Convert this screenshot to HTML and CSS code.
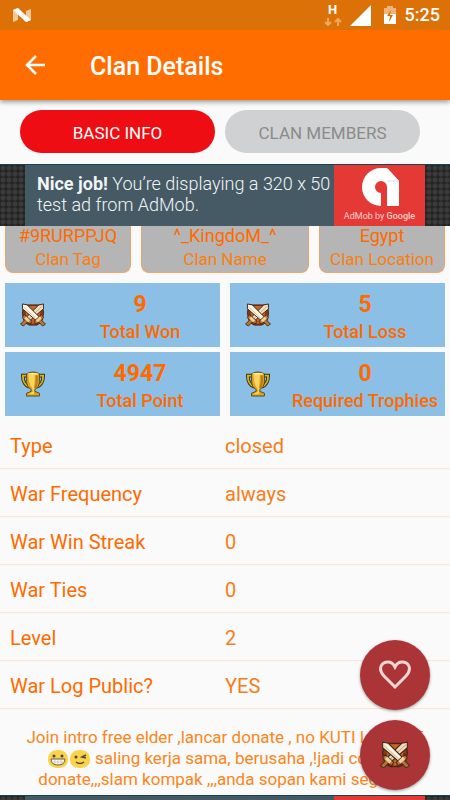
FILE: index.html
```html
<!DOCTYPE html>
<html lang="en">
<head>
<meta charset="utf-8">
<meta name="viewport" content="width=device-width, initial-scale=1">
<title>Clan Details</title>
<link rel="stylesheet" href="styles.css">
</head>
<body>
<svg class="sprites" aria-hidden="true">
  <symbol id="swords" viewBox="1 1 26 25">
    <path d="M4 3h20l1 9-2 9-5 3h-8l-5-3-2-9z" fill="#8a3812" stroke="#42200f"/>
    <path d="M8 4h12l2 4-2 11-6 4-6-4L6 8z" fill="#c9622a"/>
    <path d="M25 2v5L11 19l-4-3L20 3z" fill="#f3ddc1" stroke="#3e2a1d"/>
    <path d="M24 4 10 17" stroke="#d3ab80" stroke-width="1"/>
    <path d="m5 13 8 7-2 3-3-2-4 4-3-2 4-4-2-3z" fill="#b87434" stroke="#48301b"/>
    <path d="M3 2v5l14 12 4-3L8 3z" fill="#fff5e3" stroke="#3e2a1d"/>
    <path d="m4 5 13 12" stroke="#dcbd97" stroke-width="1"/>
    <path d="m23 13-8 7 2 3 3-2 4 4 3-2-4-4 2-3z" fill="#b87434" stroke="#48301b"/>
    <path d="m6 16 4 4m12-4-4 4" stroke="#f0cf9c" stroke-width="3"/>
  </symbol>
  <symbol id="trophy" viewBox="0 0 26 28">
    <path d="M7 5H2c0 7 2 10 7 12M19 5h5c0 7-2 10-7 12" fill="none" stroke="#35331d" stroke-width="4"/>
    <path d="M7 5H2c0 7 2 10 7 12M19 5h5c0 7-2 10-7 12" fill="none" stroke="#d8b328" stroke-width="2"/>
    <path d="M6 3q7-4 14 0v8q0 6-5 9v2l5 2v3H6v-3l5-2v-2q-5-3-5-9z" fill="#dba51e" stroke="#51441b"/>
    <path d="M8 4q1 12 4 14l1 4-5 3h6l1-21z" fill="#f8d65d"/>
    <ellipse cx="13" cy="3" rx="6" ry="1" fill="#fff0a0"/>
    <path d="M17 5q1 9-2 13" fill="none" stroke="#b97916" stroke-width="2"/>
  </symbol>
  <symbol id="admob" viewBox="0 0 38 38">
    <path d="M26 0 38 13v25H26V19a6 6 0 1 0-6 6v13a19 19 0 1 1 0-38z" fill="#fff"/>
    <path d="M26 13h12L27 1z" fill="#fff"/>
    <path d="M26 13h12" stroke="#ddd"/>
  </symbol>
</svg>

<header>
  <div class="status">
    <svg width="18" height="15" viewBox="0 0 18 15" aria-hidden="true">
      <path d="M0 2 5 0v12l-5 2zM13 3l5-2v11l-5 2z" fill="#f2c898"/>
      <path d="m0 2 5-2 13 12-5 2z" fill="#fff"/>
    </svg>
    <div class="status-right">
      <div class="network"><span>H</span>
        <svg width="18" height="8" viewBox="0 0 18 8" fill="none" stroke="#eda85f" stroke-width="2" aria-hidden="true"><path d="M4 0v7M1 4l3 3 3-3M14 8V1m-3 3 3-3 3 3"/></svg>
      </div>
      <svg class="signal" width="21" height="21" viewBox="0 0 21 21" aria-hidden="true"><path d="M21 0v21H0z" fill="#fff"/></svg>
      <svg class="battery" width="12" height="18" viewBox="0 0 12 18" aria-hidden="true"><path d="M3 0h6v2h3v6H0V2h3z" fill="#eeb379"/><path d="M0 8h12v10H0z" fill="#fff"/><path d="M7 4 3 10h3l-1 6 4-7H6z" fill="#dc7207"/></svg>
      <time>5:25</time>
    </div>
  </div>
  <div class="appbar">
    <button class="back" aria-label="Back"><svg width="20" height="20" viewBox="0 0 20 20" fill="none" stroke="#fff" stroke-width="2.500"><path d="M20 10H2M11 1l-9 9 9 9"/></svg></button>
    <h1>Clan Details</h1>
  </div>
</header>

<main>
  <nav class="tabs">
    <button class="tab active">BASIC INFO</button>
    <button class="tab">CLAN MEMBERS</button>
  </nav>

  <aside class="ad">
    <p class="ad-copy"><strong>Nice job!</strong> You’re displaying a 320 x 50<br>test ad from AdMob.</p>
    <div class="ad-brand"><svg width="38" height="38" aria-hidden="true"><use href="#admob"/></svg><span>AdMob by <b>Google</b></span></div>
  </aside>

  <section class="identity">
    <div class="card"><span>#9RURPPJQ</span><span class="soft">Clan Tag</span></div>
    <div class="card"><span>^_KingdoM_^</span><span class="soft">Clan Name</span></div>
    <div class="card"><span>Egypt</span><span class="soft">Clan Location</span></div>
  </section>

  <section class="stats">
    <div class="stat"><svg width="26" height="24" aria-hidden="true"><use href="#swords"/></svg><div class="stat-text"><b>9</b><span>Total Won</span></div></div>
    <div class="stat"><svg width="26" height="24" aria-hidden="true"><use href="#swords"/></svg><div class="stat-text"><b>5</b><span>Total Loss</span></div></div>
    <div class="stat"><svg width="24" height="26" aria-hidden="true"><use href="#trophy"/></svg><div class="stat-text"><b>4947</b><span>Total Point</span></div></div>
    <div class="stat"><svg width="24" height="26" aria-hidden="true"><use href="#trophy"/></svg><div class="stat-text"><b>0</b><span>Required Trophies</span></div></div>
  </section>

  <dl class="details">
    <div><dt>Type</dt><dd>closed</dd></div>
    <div><dt>War Frequency</dt><dd>always</dd></div>
    <div><dt>War Win Streak</dt><dd>0</dd></div>
    <div><dt>War Ties</dt><dd>0</dd></div>
    <div><dt>Level</dt><dd>2</dd></div>
    <div><dt>War Log Public?</dt><dd>YES</dd></div>
  </dl>

  <p class="about">Join intro free elder ,lancar donate , no KUTI LONCAT<br><svg class="emoji" width="20" height="18" viewBox="0 0 20 18" role="img" aria-label="Grinning face"><path d="M0 10C0 3 4 0 10 0s10 3 10 10c0 5-4 8-10 8S0 15 0 10z" fill="#fbd34b"/><circle cx="6" cy="6" r="1.500" fill="#4e463c"/><circle cx="14" cy="6" r="1.500" fill="#4e463c"/><path d="M3 9h14q0 6-7 6T3 9z" fill="#fff" stroke="#695a3d"/><path d="M4 12h12M7 9v5m3-5v6m3-6v5" stroke="#aaa18c" stroke-width=".5"/></svg><svg class="emoji" width="20" height="18" viewBox="0 0 20 18" role="img" aria-label="Winking face"><path d="M0 10C0 3 4 0 10 0s10 3 10 10c0 5-4 8-10 8S0 15 0 10z" fill="#fbd34b"/><circle cx="6" cy="7" r="1.500" fill="#4e463c"/><path d="m16 5-4 2 4 1M6 12q4 3 8 0" fill="none" stroke="#4e463c" stroke-width="1.500"/></svg> saling kerja sama, berusaha ,!jadi co lead<br>donate,,,slam kompak ,,,anda sopan kami segani ,,</p>

  <div class="ad next-ad">
    <div class="ad-copy"></div>
    <div class="ad-brand"></div>
  </div>
</main>

<div class="fabs">
  <button class="fab" aria-label="Favorite"><svg width="32" height="30" viewBox="0 0 32 30" fill="none" stroke="#f1d5d5" stroke-width="3"><path d="M16 27 5 16C-2 8 3 2 9 2c4 0 6 3 7 5 1-2 3-5 7-5 6 0 11 6 4 14z"/></svg></button>
  <button class="fab" aria-label="Clan war"><svg width="30" height="28"><use href="#swords"/></svg></button>
</div>
</body>
</html>
```
FILE: styles.css
```css
* { box-sizing: border-box; }

body {
  display: flex;
  flex-direction: column;
  margin: 0;
  min-height: 100vh;
  background: #fafafa;
  color: #ff6a00;
  font-family: Roboto, "Liberation Sans", sans-serif;
}

button { border: 0; padding: 0; font: inherit; cursor: pointer; }
svg { display: block; flex: none; }
p, h1, dl, dd { margin: 0; }
.sprites { position: absolute; width: 0; height: 0; }

header {
  position: relative;
  background: #ff6d00;
  color: #fff;
  box-shadow: 0 2px 5px rgba(0, 0, 0, .4);
}

.status {
  display: flex;
  justify-content: space-between;
  align-items: center;
  height: 30px;
  padding: 0 10px 0 13px;
  background: #dc7207;
}
.status-right { display: flex; align-items: center; }
.network {
  display: flex;
  flex-direction: column;
  align-items: center;
  gap: 2px;
  font-size: 13px;
  font-weight: 700;
  line-height: 12px;
}
.signal { margin-left: 8px; }
.battery { margin: 0 9px 0 13px; }
time { font-size: 18px; font-weight: 500; line-height: 30px; }

.appbar { display: flex; align-items: center; height: 70px; }
.back { display: grid; place-items: center; width: 70px; height: 70px; background: none; }
h1 { margin-left: 20px; padding-top: 3px; font-size: 25px; font-weight: 500; line-height: 32px; }

main { display: flex; flex: 1; flex-direction: column; }

.tabs {
  display: grid;
  grid-template-columns: 1fr 1fr;
  gap: 10px;
  padding: 10px 30px 11px 20px;
}
.tab {
  height: 43px;
  padding-top: 2px;
  border-radius: 22px;
  background: #cfd1d2;
  color: #8b8b8b;
  font-size: 17px;
}
.tab.active { background: #ee0d12; color: #fff; }

.ad {
  display: flex;
  height: 62px;
  padding: 0 25px;
  border-top: 1px solid #164450;
  background: radial-gradient(circle at 3px 3px, #3b3b3b 2px, #252525 3px) 0 0 / 6px 6px;
}
.ad-copy {
  flex: 1;
  padding: 8px 0 0 12px;
  background: #455a64;
  color: #f2f5f6;
  font-size: 18px;
  font-weight: 300;
  line-height: 21px;
  white-space: nowrap;
}
.ad-copy strong { font-weight: 700; }
.ad-brand {
  display: flex;
  flex-direction: column;
  align-items: center;
  gap: 3px;
  width: 91px;
  padding-top: 3px;
  background: #e53935;
  color: #fbd0cf;
  font-size: 9px;
  line-height: 14px;
}
.ad-brand b { font-weight: 500; }
.next-ad { flex: 1; height: auto; min-height: 5px; }
.next-ad > div { padding: 0; }

.identity {
  display: grid;
  grid-template-columns: 3fr 4fr 3fr;
  gap: 10px;
  padding: 0 5px;
}
.card {
  display: flex;
  flex-direction: column;
  align-items: center;
  height: 47px;
  border: 1px solid #f3a568;
  border-top: 0;
  border-radius: 0 0 8px 8px;
  background: #b5b5b5;
  font-size: 18px;
  line-height: 20px;
  white-space: nowrap;
}
.card .soft { font-size: 17px; line-height: 26px; color: #f77f12; }

.stats {
  display: grid;
  grid-template-columns: 1fr 1fr;
  gap: 5px 10px;
  padding: 10px 5px 5px;
}
.stat {
  display: grid;
  grid-template-columns: 55px 1fr;
  align-items: center;
  justify-items: center;
  height: 64px;
  background: #8cbfe5;
}
.stat-text {
  display: flex;
  flex-direction: column;
  align-items: center;
  padding-top: 3px;
  font-size: 18px;
  font-weight: 500;
  line-height: 24px;
  white-space: nowrap;
}
.stat-text b { font-size: 23px; font-weight: 700; line-height: 30px; }

.details { font-size: 20px; line-height: 24px; }
.details div {
  display: grid;
  grid-template-columns: 1fr 1fr;
  align-items: center;
  height: 48px;
  padding-top: 2px;
  border-bottom: 1px solid #fbe5d8;
}
.details dt { padding-left: 10px; }
.details dd { color: #f97c18; }

.about {
  padding: 18px 0 5px;
  color: #fb8620;
  font-size: 17px;
  line-height: 21px;
  text-align: center;
  white-space: nowrap;
}
.emoji { display: inline-block; margin: 0 1px; vertical-align: -4px; }

.fabs {
  position: fixed;
  right: 20px;
  bottom: 10px;
  display: grid;
  gap: 10px;
}
.fab {
  display: grid;
  place-items: center;
  width: 70px;
  height: 70px;
  border-radius: 50%;
  background: #ab3436;
  box-shadow: 0 1px 3px rgba(0, 0, 0, .4);
}
```
